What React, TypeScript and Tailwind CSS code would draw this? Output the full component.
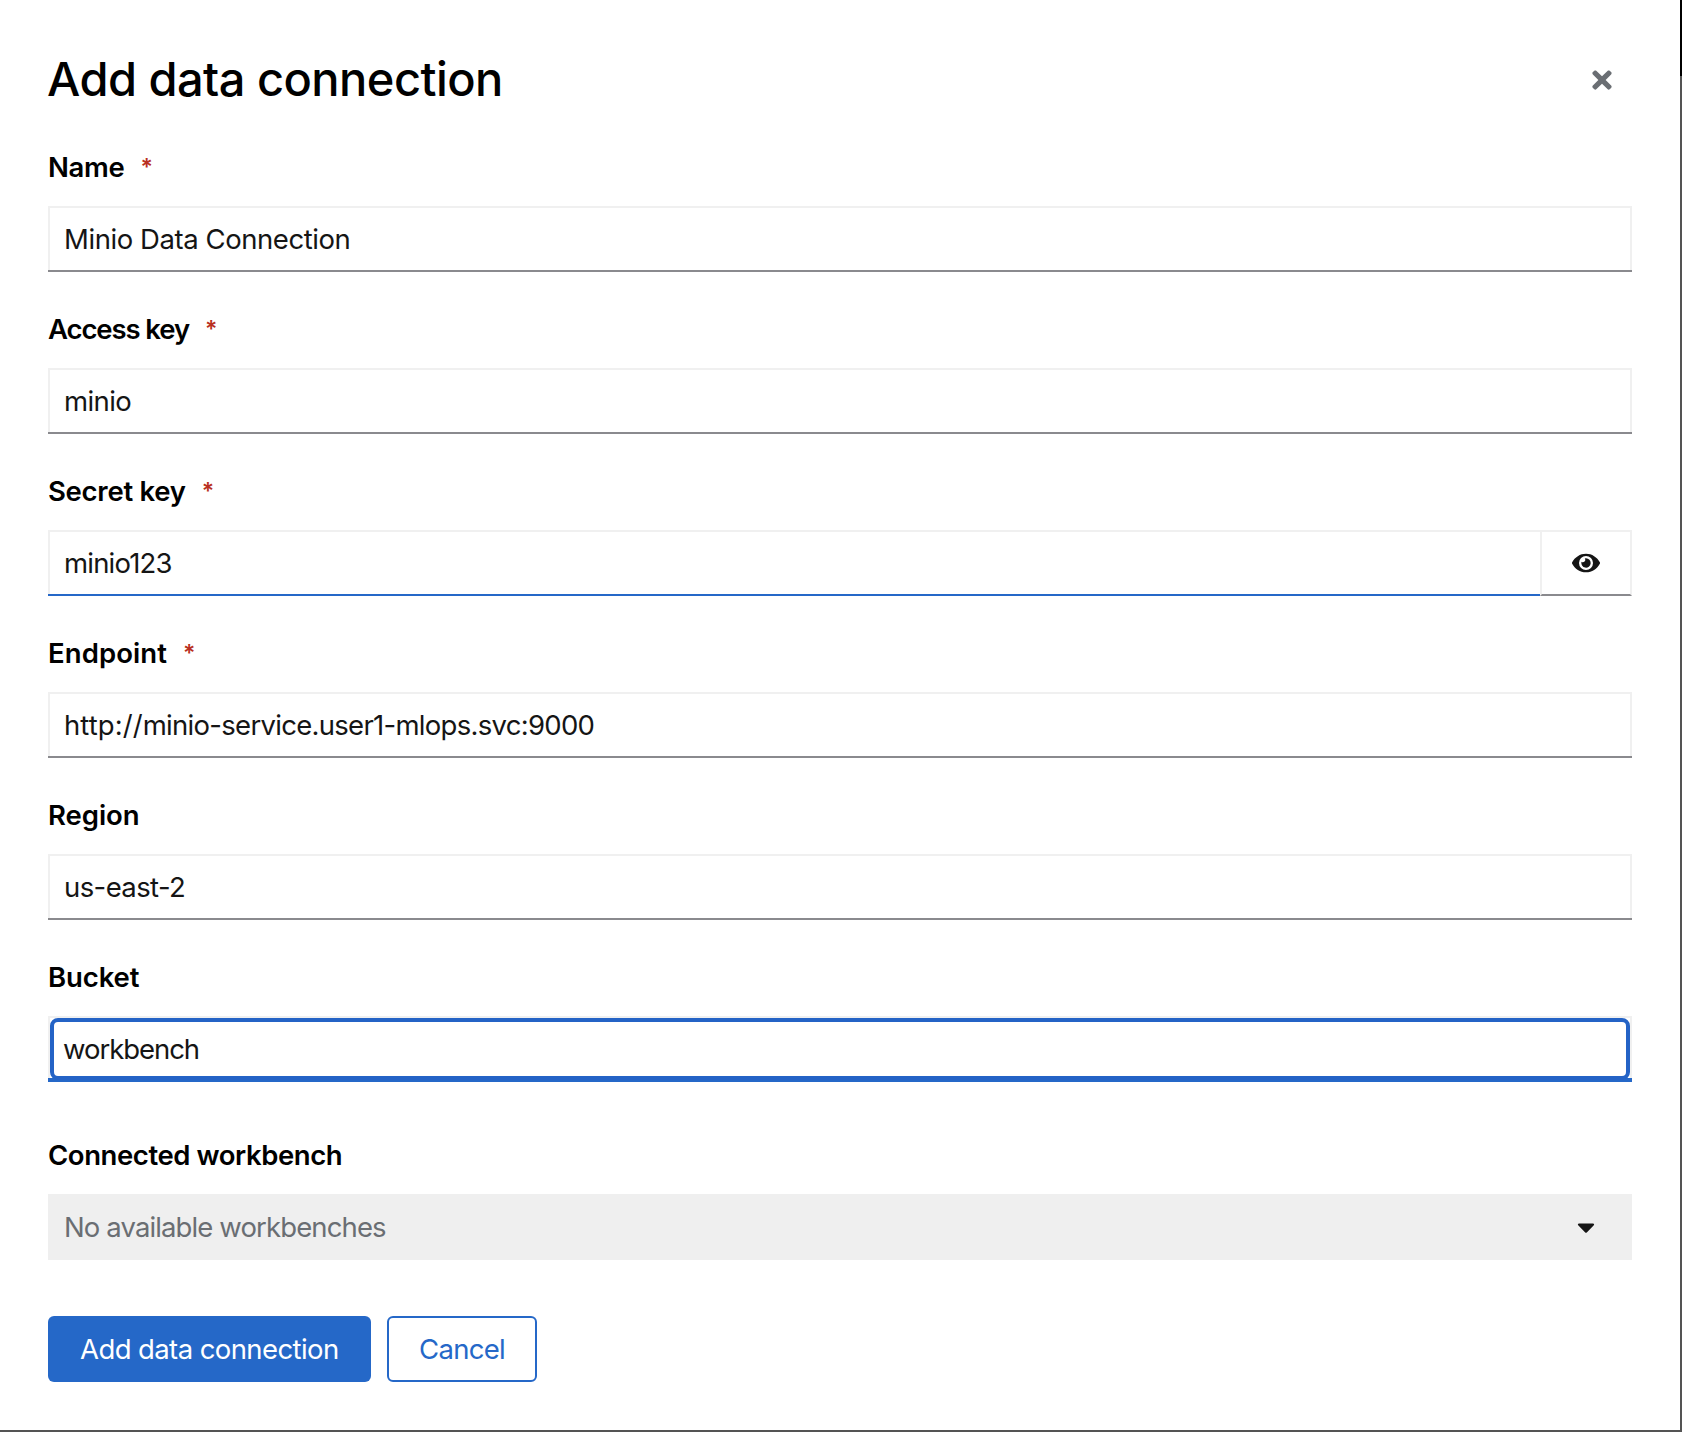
import type { ReactNode } from "react";
import { FaCaretDown, FaEye, FaTimes } from "react-icons/fa";

type LabelProps = { text: string; className: string; required?: boolean };

function Label({ text, className, required }: LabelProps) {
  return (
    <label className="mb-[18px] flex h-[42px] items-start text-[27.5px] leading-[42px] font-semibold whitespace-nowrap text-black">
      <span className={className}>{text}</span>
      {required && (
        <span className="ml-[16px] text-[23px] leading-[43px] font-semibold text-[#b92f21]" aria-hidden="true">
          *
        </span>
      )}
    </label>
  );
}

function Field({ label, children, className = "mb-9" }: { label: ReactNode; children: ReactNode; className?: string }) {
  return (
    <div className={className}>
      {label}
      {children}
    </div>
  );
}

/* The underline sits on the outer box so that it spans the full width below the side borders. */
function TextBox({ children }: { children: ReactNode }) {
  return (
    <div className="border-b-2 border-[#8a8a8e]">
      <div className="flex h-16 items-center border-2 border-b-0 border-[#f0f0f0] pl-[14px] text-[27.5px] leading-[42px] whitespace-nowrap text-[#151515]">
        {children}
      </div>
    </div>
  );
}

export default function App() {
  return (
    <div className="flex h-[1432px] w-[1682px] flex-col overflow-hidden bg-[#545454] font-['Inter',sans-serif]">
      <div className="flex h-[1430px]">
        <main className="h-full w-[1680px] bg-white pt-12 pr-12 pl-12">
          <header className="mb-9 flex h-[62px] items-center justify-between">
            <h1 className="-ml-px text-[47px] leading-[62px] font-medium tracking-[-0.54px] whitespace-nowrap text-black">
              Add data connection
            </h1>
            <button className="mt-0.5 mr-4 text-[28px] text-[#6a6e73]" aria-label="Close">
              <FaTimes />
            </button>
          </header>

          <Field label={<Label text="Name" className="tracking-[-0.3px]" required />}>
            <TextBox>
              <span className="tracking-[-0.43px]">Minio Data Connection</span>
            </TextBox>
          </Field>
          <Field label={<Label text="Access key" className="tracking-[-1.1px]" required />}>
            <TextBox>
              <span className="tracking-[-0.6px]">minio</span>
            </TextBox>
          </Field>
          <Field label={<Label text="Secret key" className="tracking-[-0.27px]" required />}>
            <div className="flex">
              <div className="flex-1 border-b-2 border-[#2568c8]">
                <div className="flex h-16 items-center border-t-2 border-l-2 border-[#f0f0f0] pl-[14px] text-[27.5px] leading-[42px] text-[#151515]">
                  <span className="tracking-[-0.81px]">minio123</span>
                </div>
              </div>
              <button
                className="flex h-[66px] w-[92px] items-center justify-center border-2 border-[#f0f0f0] border-b-[#8a8a8e] text-[28px] text-[#151515]"
                aria-label="Hide secret key"
              >
                <FaEye />
              </button>
            </div>
          </Field>
          <Field label={<Label text="Endpoint" className="tracking-[0.1px]" required />}>
            <TextBox>
              <span className="tracking-[-0.71px]">
                <span className="tracking-[0.08px]">http://</span>minio-service.user1-mlops.svc:9000
              </span>
            </TextBox>
          </Field>
          <Field label={<Label text="Region" className="tracking-[-0.05px]" />}>
            <TextBox>
              <span className="tracking-[-0.6px]">us-east-2</span>
            </TextBox>
          </Field>
          <Field label={<Label text="Bucket" className="tracking-[-0.1px]" />} className="mb-[52px]">
            <div className="relative border-b-4 border-[#2568c8]">
              <div className="flex h-[62px] items-start border-2 border-b-0 border-[#f0f0f0] pt-[10px] pl-[13px] text-[27.5px] leading-[42px] text-[#151515]">
                <span className="tracking-[-1.05px]">workbench</span>
              </div>
              <span className="pointer-events-none absolute inset-x-0.5 top-0.5 -bottom-0.5 rounded-[8px] border-4 border-[#2463c6]" />
            </div>
          </Field>
          <Field label={<Label text="Connected workbench" className="tracking-[-0.42px]" />} className="mb-14">
            <div className="flex h-[66px] items-center justify-between bg-[#efefef] pr-8 pl-4 text-[27.5px] leading-[42px] whitespace-nowrap text-[#6a6e73]">
              <span className="tracking-[-0.88px]">No available workbenches</span>
              <FaCaretDown className="text-[28px] text-[#151515]" />
            </div>
          </Field>

          <footer className="flex gap-4 text-[27.5px] leading-[42px] whitespace-nowrap">
            <button className="h-[66px] w-[323px] rounded-[6px] bg-[#2568c8] pl-8 text-left tracking-[-0.59px] text-white">
              Add data connection
            </button>
            <button className="h-[66px] w-[150px] rounded-[6px] border-2 border-[#2568c8] bg-white pl-[30px] text-left tracking-[-0.7px] text-[#2568c8]">
              Cancel
            </button>
          </footer>
        </main>
        <div className="h-[76px] w-0.5 bg-black" />
      </div>
    </div>
  );
}
